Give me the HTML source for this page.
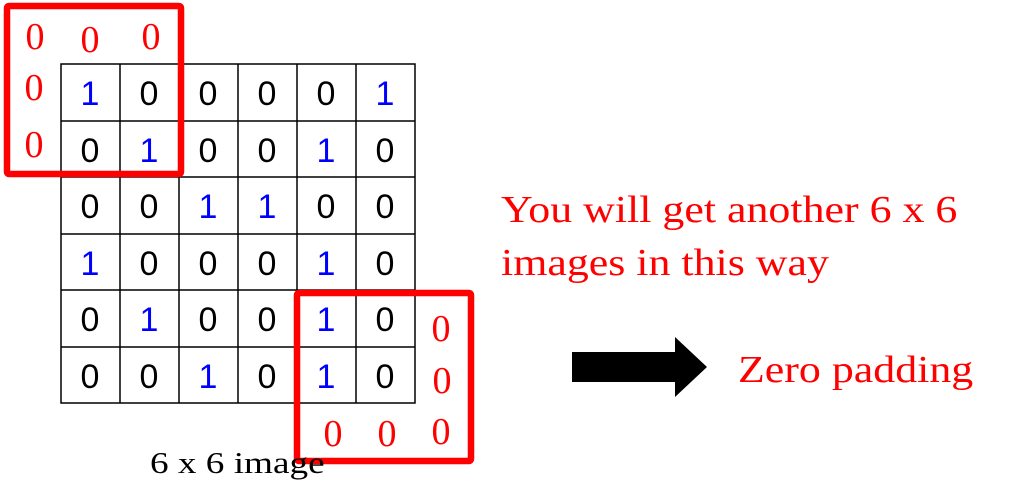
<!DOCTYPE html>
<html><head><style>
body{margin:0;width:1015px;height:490px;background:#fff;position:relative;overflow:hidden;font-family:"Liberation Sans",sans-serif}
.t{position:absolute;font-family:"Liberation Serif",serif;color:#f00;white-space:nowrap;line-height:1;transform-origin:0 0;transform:scaleX(1.155)}
</style></head><body>
<svg width="1015" height="490" style="position:absolute;left:0;top:0">
<g stroke="#000" stroke-width="1.5" fill="none">
<rect x="61" y="64" width="354" height="339"/>
<line x1="120" y1="64" x2="120" y2="403"/><line x1="179" y1="64" x2="179" y2="403"/>
<line x1="238" y1="64" x2="238" y2="403"/><line x1="297" y1="64" x2="297" y2="403"/>
<line x1="356" y1="64" x2="356" y2="403"/>
<line x1="61" y1="121" x2="415" y2="121"/><line x1="61" y1="177" x2="415" y2="177"/>
<line x1="61" y1="234" x2="415" y2="234"/><line x1="61" y1="290" x2="415" y2="290"/>
<line x1="61" y1="347" x2="415" y2="347"/>
</g>
<g font-family="Liberation Sans,sans-serif" font-size="34" text-anchor="middle">
<text x="90" y="105" fill="#00f">1</text><text x="149" y="105">0</text><text x="208" y="105">0</text><text x="267" y="105">0</text><text x="326" y="105">0</text><text x="385" y="105" fill="#00f">1</text>
<text x="90" y="162">0</text><text x="149" y="162" fill="#00f">1</text><text x="208" y="162">0</text><text x="267" y="162">0</text><text x="326" y="162" fill="#00f">1</text><text x="385" y="162">0</text>
<text x="90" y="218">0</text><text x="149" y="218">0</text><text x="208" y="218" fill="#00f">1</text><text x="267" y="218" fill="#00f">1</text><text x="326" y="218">0</text><text x="385" y="218">0</text>
<text x="90" y="275" fill="#00f">1</text><text x="149" y="275">0</text><text x="208" y="275">0</text><text x="267" y="275">0</text><text x="326" y="275" fill="#00f">1</text><text x="385" y="275">0</text>
<text x="90" y="331">0</text><text x="149" y="331" fill="#00f">1</text><text x="208" y="331">0</text><text x="267" y="331">0</text><text x="326" y="331" fill="#00f">1</text><text x="385" y="331">0</text>
<text x="90" y="388">0</text><text x="149" y="388">0</text><text x="208" y="388" fill="#00f">1</text><text x="267" y="388">0</text><text x="326" y="388" fill="#00f">1</text><text x="385" y="388">0</text>
</g>
<g font-family="Liberation Serif,serif" font-size="38" fill="#f00" text-anchor="middle">
<text x="35" y="49">0</text><text x="90" y="52">0</text><text x="151" y="49">0</text>
<text x="34" y="100">0</text><text x="34" y="157">0</text>
<text x="441" y="341">0</text><text x="442" y="393">0</text><text x="441" y="444">0</text>
<text x="333" y="446">0</text><text x="387" y="446">0</text>
</g>
<rect x="7" y="6" width="174" height="168" rx="2" fill="none" stroke="#f00" stroke-width="6.5"/>
<rect x="297" y="293" width="174" height="168" rx="2" fill="none" stroke="#f00" stroke-width="6.5"/>
<polygon points="572,352 675,352 675,337 707,367 675,397 675,382 572,382" fill="#000"/>
</svg>
<div class="t" style="left:150px;top:447px;font-size:31px;color:#000;transform:scaleX(1.2)">6 x 6 image</div>
<div class="t" style="left:501px;top:191px;font-size:38px">You will get another 6 x 6</div>
<div class="t" style="left:501px;top:244px;font-size:38px">images in this way</div>
<div class="t" style="left:738px;top:351px;font-size:38px">Zero padding</div>
</body></html>
